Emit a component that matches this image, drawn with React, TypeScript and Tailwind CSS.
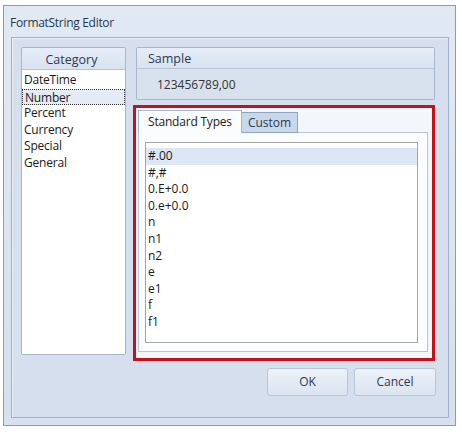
import React from "react";

const font = { fontFamily: '"Open Sans", "Noto Sans", sans-serif' };

export default function App() {
  const categories = ["DateTime", "Number", "Percent", "Currency", "Special", "General"];
  const types = ["#.00", "#,#", "0.E+0.0", "0.e+0.0", "n", "n1", "n2", "e", "e1", "f", "f1"];
  return (
    <div className="w-[462px] h-[434px] bg-white pt-[5px] pl-[3px]" style={font}>
      <div className="w-[453px] h-[421px] border border-[#8f9aab] bg-gradient-to-b from-[#e1e9f4] to-[#d6e0ee] flex flex-col">
        <div className="h-[31px] pl-[6px] pt-[2px] flex items-center text-[12px] text-[#27374d] tracking-[-0.3px]">
          FormatString Editor
        </div>
        <div className="ml-[7px] mr-[6px] h-[381px] border border-[#9fb0c8] bg-[#d5dfed] shadow-[inset_1px_1px_0_#e9eff7] flex flex-col pt-[9px] pl-[9px]">
          <div className="flex h-[314px]">
            {/* Category */}
            <div className="w-[105px] h-[308px] border border-[#a7b6cb] rounded-[2px] flex flex-col overflow-hidden">
              <div className="h-[22px] pt-[3px] bg-gradient-to-b from-[#e6edf7] to-[#d8e2f0] border-b border-[#b6c4d7] flex items-center justify-center text-[12.5px] text-[#2b3a4f] pr-[4px]">
                Category
              </div>
              <div className="flex-1 bg-white pt-[2px] text-[12px] text-[#1a1a1a] tracking-[-0.2px]">
                {categories.map((c) => (
                  <div
                    key={c}
                    className={
                      "h-[16.6px] leading-[16px] pl-[2px] " +
                      (c === "Number" ? "bg-[#e4ebf4] border border-dotted border-[#333] pl-[1px] leading-[14px]" : "")
                    }
                  >
                    {c}
                  </div>
                ))}
              </div>
            </div>
            {/* Right column */}
            <div className="ml-[10px] w-[299px] flex flex-col">
              <div className="h-[53px] border border-[#a7b6cb] rounded-[2px] flex flex-col">
                <div className="h-[21px] pt-[3px] bg-gradient-to-b from-[#e6edf7] to-[#d8e2f0] border-b border-[#b6c4d7] flex items-center pl-[11px] text-[12.5px] text-[#2b3a4f]">
                  Sample
                </div>
                <div className="flex-1 bg-[#d8e2ef] flex items-center pl-[20px] pt-[2px] text-[12px] text-[#333]">
                  123456789,00
                </div>
              </div>
              <div className="mt-[5px] ml-[-3px] w-[302px] h-[256px] border-[3px] border-[#c4121c] bg-[#f3f6fa] flex flex-col pt-[2px] pl-[2px]">
                <div className="flex items-end h-[23px] relative z-10">
                  <div className="w-[104px] h-[23px] bg-[#fbfcfe] border border-b-0 border-[#a7b6cb] pl-[9px] flex items-center text-[12px] text-[#222] tracking-[-0.2px]">
                    Standard Types
                  </div>
                  <div className="w-[56px] h-[21px] bg-[#c9d7ea] border border-[#8fa4c2] border-l-0 flex items-center justify-center text-[12px] text-[#2b3a4f]">
                    Custom
                  </div>
                </div>
                <div className="w-[290px] h-[220px] bg-[#fbfcfe] border border-[#b8c5d7] -mt-px pt-[9px] pl-[6px]">
                  <div className="w-[273px] h-[201px] bg-white border border-[#a5a5a5] pt-[5px] text-[12px] text-[#1a1a1a]">
                    {types.map((t, i) => (
                      <div
                        key={t}
                        className={"h-[16.6px] leading-[16px] pl-[2px] " + (i === 0 ? "bg-[#dce6f4]" : "")}
                      >
                        {t}
                      </div>
                    ))}
                  </div>
                </div>
              </div>
            </div>
          </div>
          <div className="mt-[7px] flex justify-end gap-[6px] pr-[12px]">
            <button className="w-[81px] h-[28px] rounded-[3px] border border-[#b7c5d8] bg-gradient-to-b from-[#edf2f9] to-[#dbe4f0] text-[12px] text-[#2b3a4f]">
              OK
            </button>
            <button className="w-[82px] h-[28px] rounded-[3px] border border-[#b7c5d8] bg-gradient-to-b from-[#edf2f9] to-[#dbe4f0] text-[12px] text-[#2b3a4f]">
              Cancel
            </button>
          </div>
        </div>
      </div>
    </div>
  );
}
